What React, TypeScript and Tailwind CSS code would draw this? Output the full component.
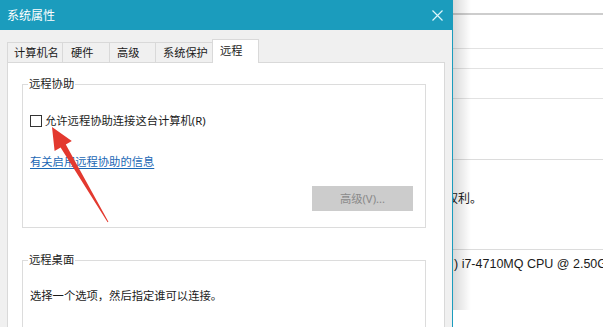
import React from "react";

const tabs = [
  { label: "计算机名", w: "w-[55px]", pl: "pl-[6px]" },
  { label: "硬件", w: "w-[47px]", pl: "pl-[8px]" },
  { label: "高级", w: "w-[46px]", pl: "pl-[7px]" },
  { label: "系统保护", w: "w-[57px]", pl: "pl-[7px]" },
];

export default function App() {
  return (
    <div className="relative w-[603px] h-[327px] overflow-hidden bg-white font-['Noto_Sans','Noto_Sans_CJK_SC',sans-serif] text-[#1a1a1a]">
      {/* window behind */}
      <div className="absolute left-0 top-0 w-[603px] h-[310px]">
        <div className="absolute left-[453px] right-0 top-[13px] h-[2px] bg-[#cdcdcd]" />
        <div className="absolute left-[453px] right-0 top-[48px] h-px bg-[#e2e2e2]" />
        <div className="absolute left-[453px] right-0 top-[68px] h-px bg-[#e2e2e2]" />
        <div className="absolute left-[453px] right-0 top-[98px] h-px bg-[#e2e2e2]" />
        <div className="absolute left-[453px] right-0 top-[159px] h-px bg-[#dcdcdc]" />
        <div className="absolute left-[453px] right-0 top-[249px] h-px bg-[#dcdcdc]" />
        <div className="absolute left-[446px] top-[191px] text-[12px] leading-[16px] whitespace-nowrap">权利。</div>
        <div className="absolute left-[454px] top-[256px] text-[12.5px] leading-[16px] whitespace-nowrap font-['Liberation_Sans',sans-serif]">) i7-4710MQ CPU @ 2.50GHz</div>
        <div className="absolute left-[453px] top-0 w-[18px] h-[310px] bg-linear-to-r from-black/15 to-transparent" />
      </div>

      {/* dialog */}
      <div className="absolute left-0 top-0 w-[453px] h-[327px] flex flex-col">
        <div className="h-[30px] bg-[#1b9cbd] flex items-center justify-between pl-[7px] pr-[10px] shrink-0">
          <span className="text-white text-[12px] leading-none mt-[2px]">系统属性</span>
          <svg width="11" height="11" viewBox="0 0 11 11" className="mt-[1px]">
            <path d="M0.5 0.5 L10.5 10.5 M10.5 0.5 L0.5 10.5" stroke="#dff6fb" strokeWidth="1.2" />
          </svg>
        </div>
        <div className="flex-1 bg-[#f0f0f0] border-r border-[#1b9cbd] flex flex-col">
          <div className="mt-[9px] pl-[7px] flex items-end text-[11.2px]">
            {tabs.map((t) => (
              <div
                key={t.label}
                className={`${t.w} ${t.pl} h-[20px] border-l border-t border-[#d9d9d9] bg-[#f0f0f0] flex items-center leading-none whitespace-nowrap`}
              >
                {t.label}
              </div>
            ))}
            <div className="w-[47px] pl-[7px] h-[24px] -mb-px relative z-10 border-l border-t border-r border-[#d9d9d9] bg-white flex items-center pb-[2px] leading-none">
              远程
            </div>
          </div>
          <div className="mx-[7px] flex-1 border border-[#d9d9d9] bg-white pt-[13px] pl-[14px] text-[11.3px]">
            <fieldset className="w-[404px] border border-[#dcdcdc] px-[7px] pb-[16px]">
              <legend className="-ml-[2px] px-[1px] leading-[16px]">远程协助</legend>
              <div className="mt-[22px] h-[14px] flex items-center">
                <div className="w-[12px] h-[12px] border border-[#333] bg-white shrink-0" />
                <span className="ml-[3px] leading-[14px] whitespace-nowrap">允许远程协助连接这台计算机(R)</span>
              </div>
              <div className="mt-[26px] leading-[16px] text-[#1a67b5] underline underline-offset-2">
                有关启用远程协助的信息
              </div>
              <div className="mt-[16px] flex justify-end pr-[5px]">
                <div className="w-[101px] h-[25px] bg-[#cccccc] text-[#8a8a8a] flex items-center justify-center leading-none">
                  高级(V)...
                </div>
              </div>
            </fieldset>
            <fieldset className="mt-[24px] w-[404px] border border-[#dcdcdc] px-[7px] pb-[40px]">
              <legend className="-ml-[2px] px-[1px] leading-[16px]">远程桌面</legend>
              <div className="mt-[20px] leading-[16px] whitespace-nowrap">选择一个选项，然后指定谁可以连接。</div>
            </fieldset>
          </div>
        </div>
      </div>

      {/* red arrow annotation */}
      <svg className="absolute left-0 top-0 pointer-events-none z-20" width="603" height="327" viewBox="0 0 603 327">
        <polygon
          points="52,127 71.8,140.9 65.8,144.5 108.4,221.8 107.6,222.2 60.6,147.5 54.6,151.1"
          fill="#e3392f"
        />
      </svg>
    </div>
  );
}
